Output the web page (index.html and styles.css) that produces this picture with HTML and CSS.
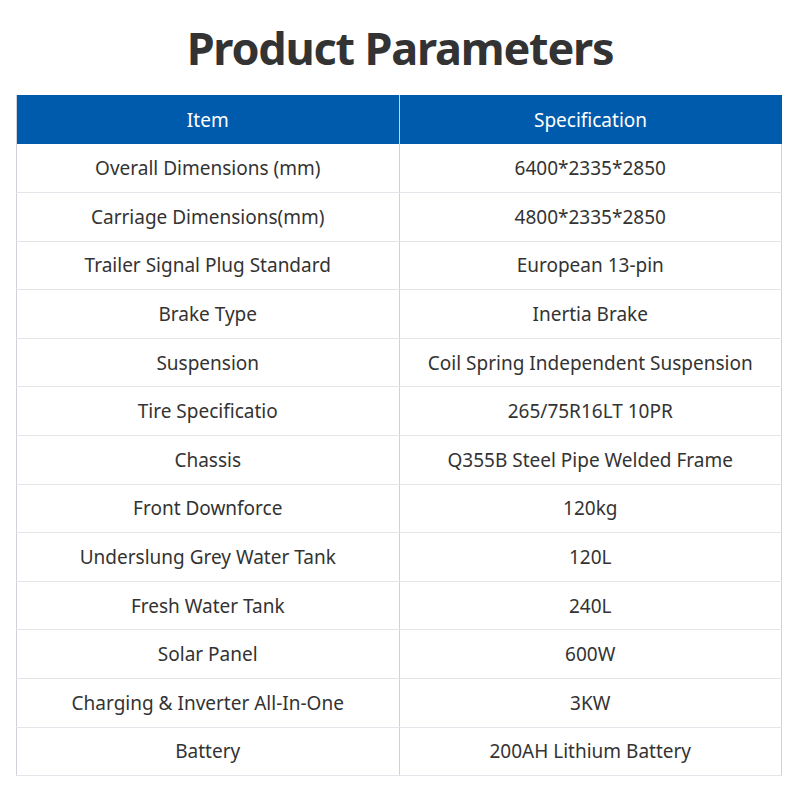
FILE: index.html
```html
<!DOCTYPE html>
<html>
<head>
<meta charset="utf-8">
<link rel="stylesheet" href="styles.css">
</head>
<body>
<h1 class="title">Product Parameters</h1>
<table class="params">
  <thead>
    <tr><th>Item</th><th>Specification</th></tr>
  </thead>
  <tbody>
    <tr><td>Overall Dimensions (mm)</td><td>6400*2335*2850</td></tr>
    <tr><td>Carriage Dimensions(mm)</td><td>4800*2335*2850</td></tr>
    <tr><td>Trailer Signal Plug Standard</td><td>European 13-pin</td></tr>
    <tr><td>Brake Type</td><td>Inertia Brake</td></tr>
    <tr><td>Suspension</td><td>Coil Spring Independent Suspension</td></tr>
    <tr><td>Tire Specificatio</td><td>265/75R16LT 10PR</td></tr>
    <tr><td>Chassis</td><td>Q355B Steel Pipe Welded Frame</td></tr>
    <tr><td>Front Downforce</td><td>120kg</td></tr>
    <tr><td>Underslung Grey Water Tank</td><td>120L</td></tr>
    <tr><td>Fresh Water Tank</td><td>240L</td></tr>
    <tr><td>Solar Panel</td><td>600W</td></tr>
    <tr><td>Charging &amp; Inverter All-In-One</td><td>3KW</td></tr>
    <tr><td>Battery</td><td>200AH Lithium Battery</td></tr>
  </tbody>
</table>
</body>
</html>
```

FILE: styles.css
```css
html, body {
  margin: 0;
  padding: 0;
  background: #ffffff;
}
body {
  width: 800px;
  font-family: "Noto Sans", "Open Sans", sans-serif;
  color: #333333;
}
.title {
  margin: 0;
  padding-top: 25px;
  height: 95px;
  box-sizing: border-box;
  text-align: center;
  font-size: 45px;
  font-weight: 700;
  line-height: 45px;
  letter-spacing: -1.2px;
  color: #333333;
}
.params {
  margin-left: 16px;
  width: 766px;
  border-collapse: collapse;
  table-layout: fixed;
}
.params th {
  background: #005bac;
  color: #ffffff;
  font-weight: 400;
  font-size: 19px;
  height: 49px;
  padding: 0;
  border-left: 1px solid #d0d0d8;
  box-sizing: border-box;
}
.params td {
  font-size: 19px;
  text-align: center;
  height: 48.6px;
  padding: 0;
  border-bottom: 1px solid #e4e4ea;
  border-left: 1px solid #d0d0d8;
  border-right: 1px solid #d0d0d8;
  box-sizing: border-box;
}
```
